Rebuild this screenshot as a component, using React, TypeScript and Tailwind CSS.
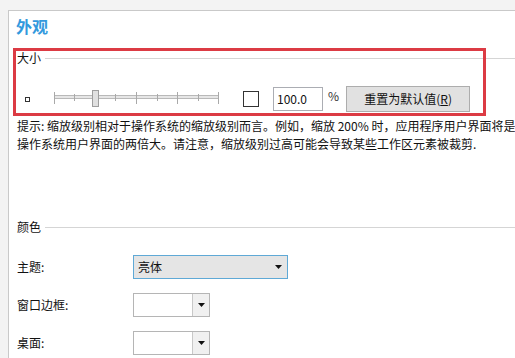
import React from 'react';

const FONT = { fontFamily: '"Noto Sans CJK SC", "Noto Sans", sans-serif' };

function Slider() {
  // ticks relative to the track start
  const ticks = [
    { x: 0, tall: true },
    { x: 20, tall: false },
    { x: 61, tall: false },
    { x: 82, tall: true },
    { x: 103, tall: false },
    { x: 123, tall: true },
    { x: 144, tall: false },
    { x: 164, tall: true },
  ];
  return (
    <svg width="168" height="18" viewBox="0 0 168 18" className="block">
      <rect x="0.5" y="5.5" width="164" height="3" fill="#e6e6e6" stroke="#b9b9b9" />
      {ticks.map((t, i) => (
        <line
          key={i}
          x1={t.x + 0.5}
          x2={t.x + 0.5}
          y1={t.tall ? 2 : 4}
          y2={t.tall ? 14 : 11}
          stroke="#a9a9a9"
        />
      ))}
      <rect x="38.5" y="0.5" width="6" height="16" fill="#e0e0e0" stroke="#9e9e9e" />
    </svg>
  );
}

function Arrow() {
  return (
    <svg width="7" height="4" viewBox="0 0 7 4" className="block">
      <path d="M0 0 H7 L3.5 4 Z" fill="#111" />
    </svg>
  );
}

function GroupHeader({ label }: { label: string }) {
  return (
    <div className="flex items-center h-[16px] pl-[8px]">
      <span className="text-[12px] leading-[16px] text-[#111]">{label}</span>
      <div className="flex-1 h-px bg-[#d5d5d5] ml-[4px]" />
    </div>
  );
}

function SmallCombo() {
  return (
    <div className="flex w-[77px] h-[24px] border border-[#b5b5b5] bg-white">
      <div className="flex-1" />
      <div className="w-[17px] h-full border-l border-[#c8c8c8] bg-[#f0f0f0] flex items-center justify-center">
        <Arrow />
      </div>
    </div>
  );
}

export default function App() {
  return (
    <div className="relative w-[515px] h-[358px] overflow-hidden bg-[#f3f3f3] pt-[10px] pl-[8px]" style={FONT}>
      <div className="h-[400px] border-l border-t border-[#c9c9c9] bg-white pt-[4px]">
        {/* Title */}
        <div className="pl-[7px] text-[16px] leading-[22px] text-[#3399dd] font-bold">外观</div>

        {/* 大小 */}
        <div className="mt-[13px]">
          <GroupHeader label="大小" />
        </div>
        <div className="mt-[20px] flex items-center h-[26px] pl-[16px]">
          <div className="w-[5px] h-[5px] border border-[#333]" />
          <div className="ml-[24px]">
            <Slider />
          </div>
          <div className="ml-[21px] w-[16px] h-[16px] border border-[#333] bg-white" />
          <div className="ml-[14px] w-[50px] h-[24px] border border-[#abadb3] bg-white pl-[3px] text-[12px] leading-[22px] text-[#111]">
            100.0
          </div>
          <span className="ml-[5px] self-start mt-[2px] text-[12px] leading-[16px] text-[#333]">%</span>
          <button className="ml-[7px] w-[124px] h-[26px] border border-[#adadad] bg-[#e1e1e1] text-[12px] leading-[24px] text-[#111]">
            重置为默认值(<span className="underline">R</span>)
          </button>
        </div>

        {/* hint */}
        <div className="mt-[5px] pl-[8px] text-[12px] leading-[18px] text-[#111] whitespace-nowrap">
          <div>提示: 缩放级别相对于操作系统的缩放级别而言。例如，缩放 200% 时，应用程序用户界面将是</div>
          <div>操作系统用户界面的两倍大。请注意，缩放级别过高可能会导致某些工作区元素被裁剪.</div>
        </div>

        {/* 颜色 */}
        <div className="mt-[66px]">
          <GroupHeader label="颜色" />
        </div>

        <div className="mt-[20px] flex items-center pl-[8px]">
          <span className="w-[116px] text-[12px] text-[#111]">主题:</span>
          <div className="w-[155px] h-[24px] border border-[#5fa9d6] bg-[#e5e5e5] flex items-center pl-[4px] pr-[5px]">
            <span className="flex-1 text-[12px] leading-[16px] text-[#111]">亮体</span>
            <Arrow />
          </div>
        </div>

        <div className="mt-[14px] flex items-center pl-[8px]">
          <span className="w-[116px] text-[12px] text-[#111]">窗口边框:</span>
          <SmallCombo />
        </div>

        <div className="mt-[14px] flex items-center pl-[8px]">
          <span className="w-[116px] text-[12px] text-[#111]">桌面:</span>
          <SmallCombo />
        </div>
      </div>

      {/* annotation overlay */}
      <div className="absolute left-[13px] top-[48px] w-[473px] h-[68px] border-[3px] border-[#dc3b44] pointer-events-none" />
    </div>
  );
}
